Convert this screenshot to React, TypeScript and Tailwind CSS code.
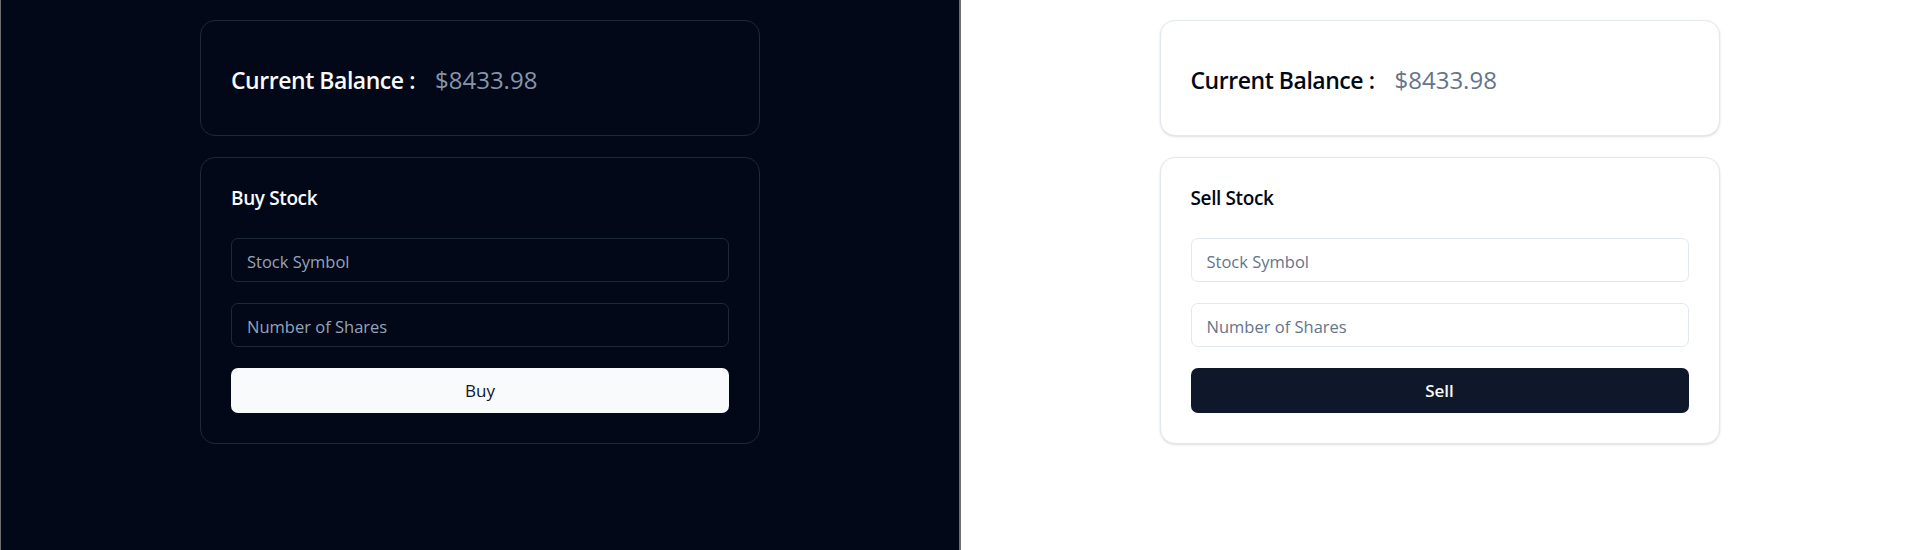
import { useState } from "react";

type Mode = "buy" | "sell";

const BALANCE = 8433.98;

function TradePanel({ mode }: { mode: Mode }) {
  const dark = mode === "buy";
  const [symbol, setSymbol] = useState("");
  const [shares, setShares] = useState("");

  const cardCls = dark
    ? "w-[560px] rounded-[15px] border border-[#1e293b] bg-[#020817] text-[#f8fafc]"
    : "w-[560px] rounded-[15px] border border-[#e2e8f0] bg-white text-[#020817] shadow-sm";

  const inputCls = dark
    ? "h-[44px] w-full rounded-[7px] border border-[#1e293b] bg-transparent px-[15px] pt-[2px] text-[16.5px] text-[#f8fafc] outline-none placeholder:text-[#94a3b8]"
    : "h-[44px] w-full rounded-[7px] border border-[#e2e8f0] bg-transparent px-[15px] pt-[2px] text-[16.5px] text-[#020817] outline-none placeholder:text-[#64748b]";

  const buttonCls = dark
    ? "h-[45px] w-full rounded-[7px] bg-[#f8fafc] text-[17px] font-medium text-[#0f172a]"
    : "h-[45px] w-full rounded-[7px] bg-[#0f172a] text-[17px] font-semibold text-[#f8fafc]";

  return (
    <div className="flex flex-col items-center pt-5">
      <div className={cardCls}>
        <div className="flex h-[114px] items-center px-[30px] pt-[4px]">
          <span className="text-[23px] font-semibold tracking-[-0.02em]">Current Balance :</span>
          <span
            className={
              dark
                ? "ml-[20px] text-[24px] text-[#8595ab]"
                : "ml-[20px] text-[24px] text-[#64748b]"
            }
          >
            ${BALANCE.toFixed(2)}
          </span>
        </div>
      </div>

      <div className={cardCls + " mt-[21px]"}>
        <div className="px-[30px] pt-[31px] pb-[30px]">
          <h3 className="text-[19px] font-semibold leading-none tracking-[-0.02em]">
            {dark ? "Buy Stock" : "Sell Stock"}
          </h3>
        </div>
        <div className="flex flex-col gap-[21px] px-[30px] pb-[30px]">
          <input
            className={inputCls}
            placeholder="Stock Symbol"
            value={symbol}
            onChange={(e) => setSymbol(e.target.value)}
          />
          <input
            className={inputCls}
            placeholder="Number of Shares"
            value={shares}
            onChange={(e) => setShares(e.target.value)}
          />
          <button className={buttonCls}>{dark ? "Buy" : "Sell"}</button>
        </div>
      </div>
    </div>
  );
}

export default function App() {
  return (
    <div className="grid h-[550px] grid-cols-[960px_1fr] font-['Segoe_UI','Open_Sans',sans-serif]">
      <div className="border-x border-[#6e6e6e] bg-[#020817]">
        <TradePanel mode="buy" />
      </div>
      <div className="border-l border-[#6e6e6e] bg-white">
        <TradePanel mode="sell" />
      </div>
    </div>
  );
}
